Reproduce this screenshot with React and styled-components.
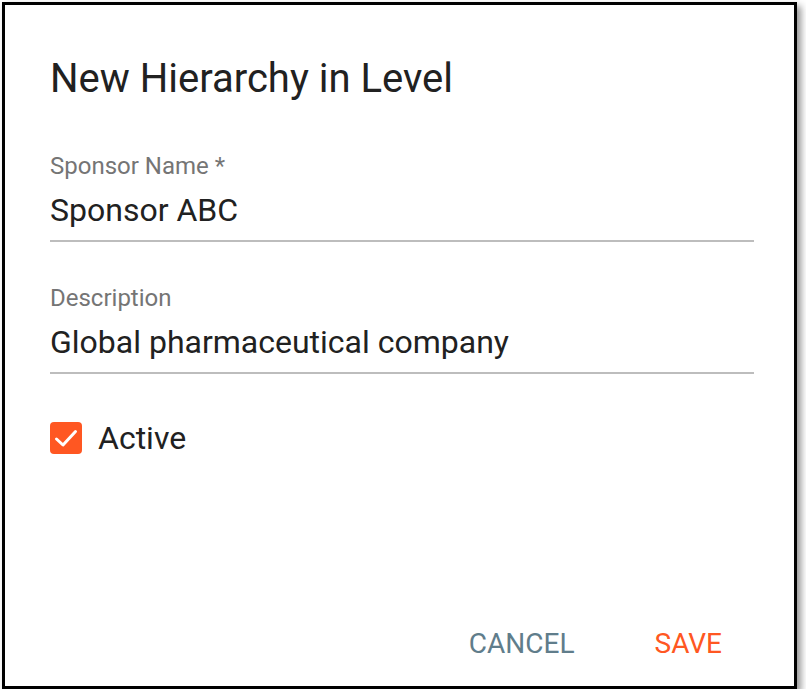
import React from "react";
import styled, { createGlobalStyle } from "styled-components";

const GlobalStyle = createGlobalStyle`
  body {
    margin: 0;
    background: #fff;
    font-family: Roboto, "Liberation Sans", sans-serif;
  }
`;

function Field({ label, value }) {
  return (
    <FieldBox>
      <Label>{label}</Label>
      <Value>{value}</Value>
    </FieldBox>
  );
}

function CheckMark() {
  return (
    <svg width="32" height="32" viewBox="0 0 32 32">
      <rect x="0" y="0" width="32" height="32" rx="4" fill="#ff5722" />
      <polyline
        points="6.5,17 13,23 25.5,9.5"
        fill="none"
        stroke="#fff"
        strokeWidth="3"
        strokeLinecap="round"
        strokeLinejoin="round"
      />
    </svg>
  );
}

export default function App() {
  return (
    <>
      <GlobalStyle />
      <Dialog>
        <Title>New Hierarchy in Level</Title>
        <Form>
          <Field label="Sponsor Name *" value="Sponsor ABC" />
          <Field label="Description" value="Global pharmaceutical company" />
          <CheckRow>
            <CheckMark />
            <CheckLabel>Active</CheckLabel>
          </CheckRow>
        </Form>
        <Actions>
          <TextButton>CANCEL</TextButton>
          <TextButton $primary>SAVE</TextButton>
        </Actions>
      </Dialog>
    </>
  );
}

const Dialog = styled.div`
  box-sizing: border-box;
  margin: 2px 0 0 2px;
  width: 795px;
  height: 687px;
  border: 3px solid #000;
  background: #fff;
  box-shadow: 4px 4px 7px rgba(0, 0, 0, 0.42);
  display: flex;
  flex-direction: column;
  padding: 50px 40px 24px 45px;
`;

const Title = styled.h2`
  margin: 0;
  font-size: 40px;
  line-height: 48px;
  font-weight: 400;
  color: #212121;
`;

const Form = styled.div`
  display: flex;
  flex-direction: column;
  margin-top: 51px;
`;

const FieldBox = styled.div`
  display: flex;
  flex-direction: column;
  border-bottom: 2px solid #bdbdbd;
  padding-bottom: 10px;
  margin-bottom: 44px;
`;

const Label = styled.div`
  font-size: 24px;
  line-height: 24px;
  color: #757575;
  margin-bottom: 12px;
`;

const Value = styled.div`
  font-size: 32px;
  line-height: 40px;
  color: #212121;
`;

const CheckRow = styled.label`
  display: flex;
  align-items: center;
  gap: 16px;
  margin-top: 4px;
  height: 32px;
`;

const CheckLabel = styled.span`
  font-size: 32px;
  line-height: 32px;
  color: #212121;
`;

const Actions = styled.div`
  margin-top: auto;
  display: flex;
  justify-content: flex-end;
  align-items: center;
  gap: 80px;
  padding-right: 32px;
`;

const TextButton = styled.button`
  border: none;
  background: none;
  padding: 0;
  font-family: inherit;
  font-size: 28px;
  line-height: 36px;
  font-weight: 400;
  color: ${(p) => (p.$primary ? "#ff5722" : "#607d8b")};
  cursor: pointer;
`;
